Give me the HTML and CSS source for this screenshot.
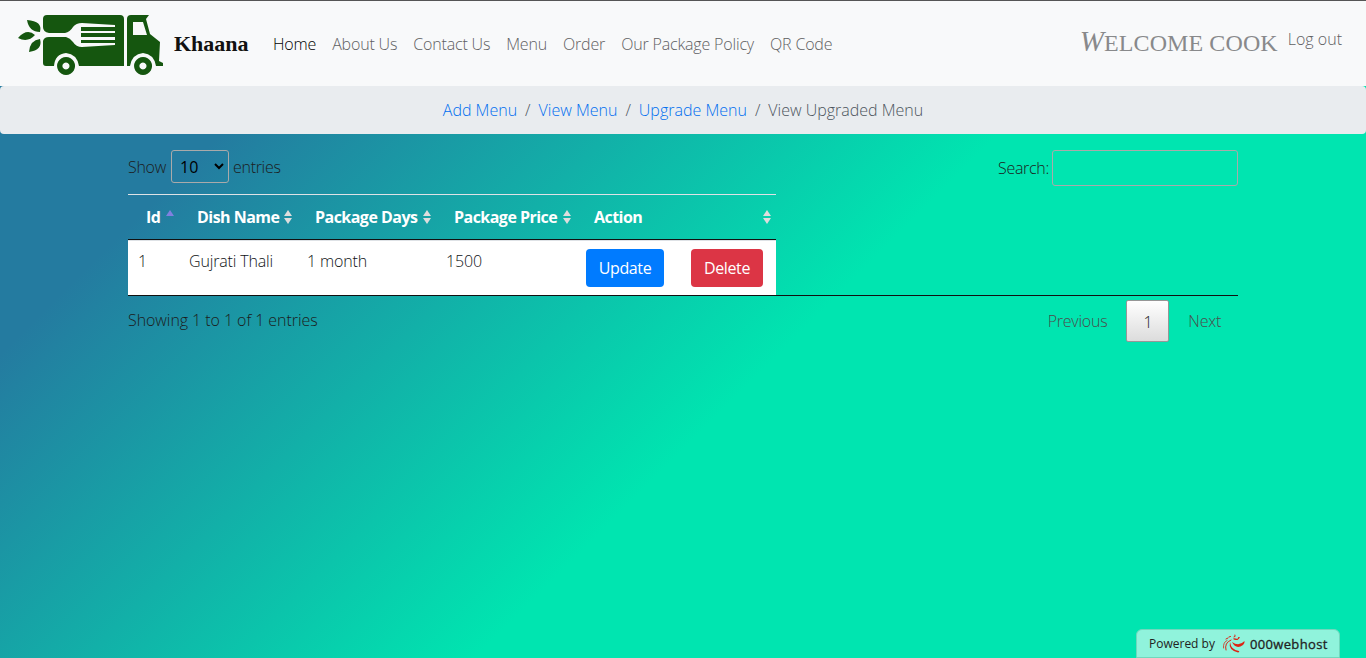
FILE: index.html
```html
<!DOCTYPE html>
<html lang="en">
<head>
<meta charset="utf-8">
<title>Khaana</title>
<link rel="stylesheet" href="styles.css">
</head>
<body>
<nav class="navbar">
  <svg class="logo" viewBox="0 0 150 66" width="150" height="66">
    <g fill="#15560f">
      <path d="M31 1H104Q108 1 108 5V52H63Q61 40 50 39Q39 40 38 52H30Q27 52 27 49V27Q28 23 33 23H50Q54 24 57 28Q60 33 66 33L99 31V29H65V26H99V23H65V19H99V17H65V13H99V11L66 9Q60 9 57 13Q54 18 49 19H33Q27 18 27 13V5Q27 1 31 1Z"/>
      <path d="M115 1H133L130 5L134 20L144 28L143 47L147 49V52H140Q138 40 127 39Q116 40 114 52H111V5Q111 1 115 1ZM117 8V21H131L127 8Z" fill-rule="evenodd"/>
      <path d="M11 6Q27 7 24 18Q13 18 11 6ZM2 24Q11 14 19 21Q12 29 2 24ZM13 38Q14 26 24 25Q27 36 13 38Z"/>
      <path fill-rule="evenodd" d="M50 43a9 9 0 1 0 .1 0ZM50 48.500a3.500 3.500 0 1 1-.1 0ZM127 43a9 9 0 1 0 .1 0ZM127 48.500a3.500 3.500 0 1 1-.1 0Z"/>
    </g>
  </svg>
  <span class="brand">Khaana</span>
  <div class="links">
    <a class="active">Home</a><a>About Us</a><a>Contact Us</a><a>Menu</a><a>Order</a><a>Our Package Policy</a><a>QR Code</a>
  </div>
  <span class="welcome"><span class="cap">W</span>ELCOME COOK</span>
  <a class="logout">Log out</a>
</nav>
<div class="crumbs"><a>Add Menu</a><i>/</i><a>View Menu</a><i>/</i><a>Upgrade Menu</a><i>/</i><span>View Upgraded Menu</span></div>
<main class="panel">
  <div class="tools">
    <div class="length"><span class="show">Show</span>
      <div class="select">10<svg width="10" height="7" viewBox="0 0 10 7"><path d="M1 1L5 5L9 1" fill="none" stroke="#000" stroke-width="2"/></svg></div>
      <span class="entries">entries</span></div>
    <div class="search"><span>Search:</span><input type="text"></div>
  </div>
  <div class="tablewrap">
    <div class="row head">
      <div><b>Id</b><s class="up asc"></s></div>
      <div><b>Dish Name</b><s class="up"></s><s class="down"></s></div>
      <div><b>Package Days</b><s class="up"></s><s class="down"></s></div>
      <div><b>Package Price</b><s class="up"></s><s class="down"></s></div>
      <div><b>Action</b></div>
      <div><s class="up"></s><s class="down"></s></div>
    </div>
    <div class="row data">
      <div>1</div><div>Gujrati Thali</div><div>1 month</div><div>1500</div>
      <div><button class="btn blue">Update</button></div><div><button class="btn red">Delete</button></div>
    </div>
  </div>
  <div class="foot">
    <div class="info">Showing 1 to 1 of 1 entries</div>
    <div class="pages"><span class="prev">Previous</span><span class="current">1</span><span class="next">Next</span></div>
  </div>
</main>
<div class="badge"><span class="powered">Powered by</span>
  <svg width="24" height="20" viewBox="0 0 24 20" fill="none" stroke="#dc2414" stroke-linecap="round">
    <path d="M1.500 14Q1 8 5 6.500" stroke-width=".8"/><path d="M4 16Q2 9 9 6" stroke-width="1"/><path d="M4 5L6 4M7 3L8.500 2.500M12 3Q14 3 13 1" stroke-width="1"/>
    <path d="M12 5Q17 7 17 3Q17 6 13 5Z" stroke-width="1"/>
    <g fill="#dc2414" stroke="none"><path d="M8 8Q6 16 16 18.500Q18 18 17 17Q9 16 8 8Z"/><path d="M10 8Q14 16 21 11Q23 9 22.500 7Q17 13 10 8Z"/></g>
  </svg>
  <span class="host">000webhost</span></div>
</body>
</html>
```
FILE: styles.css
```css
* { box-sizing: border-box; }
body { margin: 0; height: 658px; overflow: hidden; font: 300 16px/24px "Open Sans", "Noto Sans", sans-serif; letter-spacing: -0.15px; color: #101316; background: linear-gradient(135deg, #247ba0 17.500%, #00e5b0 56%); display: flex; flex-direction: column; }
.navbar { height: 86px; flex: none; background: #f8f9fa; border-top: 1px solid #555; display: flex; align-items: center; padding: 0 24px 0 16px; white-space: nowrap; }
.logo { margin-top: 7px; }
.brand { margin-left: 8px; width: 74px; font: bold 22px/30px "Liberation Serif", serif; letter-spacing: 0; color: #111; }
.links { margin-left: 25px; display: flex; gap: 16px; color: #5f6062; letter-spacing: -0.17px; }
.active { color: #000; }
.welcome { margin-left: auto; font: 24px/30px "Liberation Serif", serif; letter-spacing: 0.1px; color: #88898b; position: relative; top: -2px; }
.cap { font-size: 29px; font-style: italic; }
.logout { margin: -9px 0 0 10px; color: #5f6062; letter-spacing: 0; }
.crumbs { height: 48px; flex: none; background: #e9ecef; border-radius: 4px; display: flex; justify-content: center; align-items: center; color: #4c555d; letter-spacing: 0; }
.crumbs a { color: #006ef0; }
.crumbs i { font-style: normal; padding: 0 8px; }
.panel { width: 1110px; margin: 16px 0 0 128px; }
.tools { display: flex; justify-content: space-between; height: 44px; color: #1c1c1c; letter-spacing: -0.3px; }
.length, .search { display: flex; align-items: center; height: 36px; }
.length { height: 33px; gap: 4px; }
.show { width: 39px; }
.select { width: 58px; height: 33px; border: 1px solid #aaa; border-radius: 3px; padding: 0 4px 0 8px; display: flex; align-items: center; justify-content: space-between; color: #000; letter-spacing: 0; font-weight: 400; }
.search { gap: 3px; }
.search input { width: 186px; height: 36px; border: 1px solid #aaa; border-radius: 3px; background: transparent; padding: 5px; }
.tablewrap { border-bottom: 1px solid #111; }
.row { width: 648px; display: grid; grid-template-columns: 51px 118px 139px 140px 105px 95px; }
.head { height: 46px; border-top: 1px solid #dee2e6; border-bottom: 1px solid #111; color: #fff; }
.head > div { position: relative; padding: 10px 18px; }
.head b { white-space: nowrap; font-weight: 700; letter-spacing: -0.53px; }
.head s { position: absolute; right: 5px; border: 4px solid transparent; }
.head .up { top: 11px; border-bottom: 6px solid #ddd; }
.head .down { top: 23px; border-top: 6px solid #ddd; }
.head .asc { border-bottom-color: #8080e0; }
.data { height: 55px; background: #fff; border-top: 1px solid #dee2e6; }
.data > div { padding: 8px 10px; white-space: nowrap; }
.btn { height: 38px; border: 0; border-radius: 4px; color: #fff; font: 400 16px/24px "Open Sans", sans-serif; letter-spacing: -0.35px; padding: 0; }
.blue { width: 78px; background: #007bff; }
.red { width: 72px; background: #dc3545; }
.foot { display: flex; justify-content: space-between; color: #1c1c1c; padding-top: 4px; }
.info { padding-top: 8px; letter-spacing: -0.07px; }
.pages { display: flex; color: #4c4c4c; align-items: center; padding-right: 17px; gap: 19px; letter-spacing: -0.25px; }
.current { width: 43px; height: 42px; border: 1px solid #979797; border-radius: 2px; background: linear-gradient(#fff, #dcdcdc); color: #222; text-align: center; line-height: 42px; }
.badge { position: absolute; right: 26px; bottom: 0; width: 204px; height: 29px; background: #90f3dc; border: 1px solid #70d8bd; border-radius: 6px 6px 0 0; display: flex; align-items: center; padding-left: 12px; font: 400 12px/20px "Open Sans", sans-serif; letter-spacing: 0; color: #222; }
.badge svg { margin: 0 4px 0 7px; }
.host { font-size: 13px; letter-spacing: 0.35px; -webkit-text-stroke: 0.3px #222; }
```
